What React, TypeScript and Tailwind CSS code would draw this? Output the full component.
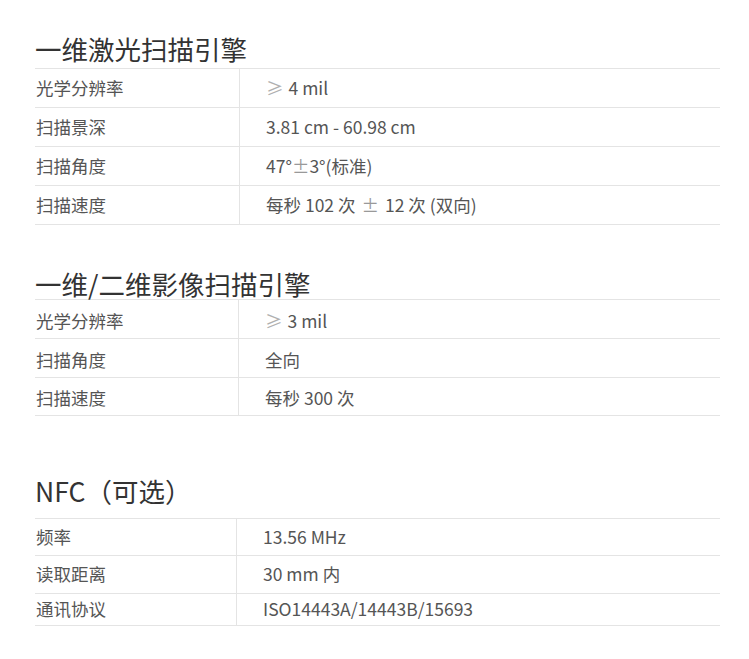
const FONT = "font-['Noto_Sans_CJK_SC','Noto_Sans',sans-serif]";

type Row = { label: string; value: React.ReactNode; h: string };

const LASER: Row[] = [
  { label: "光学分辨率", value: <><span className="text-[#b0b0b0] mr-[5px]">≥</span>4 mil</>, h: "h-[39px]" },
  { label: "扫描景深", value: "3.81 cm - 60.98 cm", h: "h-[39px]" },
  { label: "扫描角度", value: <>47°<span className="text-[#999]">±</span>3°(标准)</>, h: "h-[39px]" },
  { label: "扫描速度", value: <>每秒 102 次<span className="text-[#999] mx-[6px]">±</span>12 次 (双向)</>, h: "h-[39px]" },
];

const IMAGER: Row[] = [
  { label: "光学分辨率", value: <><span className="text-[#b0b0b0] mr-[5px]">≥</span>3 mil</>, h: "h-[39px]" },
  { label: "扫描角度", value: "全向", h: "h-[39px]" },
  { label: "扫描速度", value: "每秒 300 次", h: "h-[38px]" },
];

const NFC: Row[] = [
  { label: "频率", value: "13.56 MHz", h: "h-[37px]" },
  { label: "读取距离", value: "30 mm 内", h: "h-[38px]" },
  { label: "通讯协议", value: "ISO14443A/14443B/15693", h: "h-[32px]" },
];

function SpecTable({ rows, labelW, pt = "" }: { rows: Row[]; labelW: string; pt?: string }) {
  return (
    <div className="border-t border-[#e4e4e4]">
      {rows.map((r) => (
        <div key={r.label} className={`flex border-b border-[#e4e4e4] ${r.h}`}>
          <div className={`${labelW} ${pt} shrink-0 flex items-center pl-px border-r border-[#e4e4e4] text-[17.5px] text-[#555]`}>
            {r.label}
          </div>
          <div className={`flex-1 ${pt} flex items-center pl-[26px] text-[17.5px] text-[#555]`}>{r.value}</div>
        </div>
      ))}
    </div>
  );
}

export default function App() {
  return (
    <main className={`min-h-screen bg-white ${FONT}`}>
      <div className="w-[685px] ml-[35px] pt-[34px] pb-8">
        <section>
          <h2 className="text-[26.5px] leading-[30px] text-[#333] mb-[4px]">一维激光扫描引擎</h2>
          <SpecTable rows={LASER} labelW="w-[205px]" />
        </section>

        <section className="mt-[44px]">
          <h2 className="text-[26.5px] leading-[30px] text-[#333]">一维/二维影像扫描引擎</h2>
          <SpecTable rows={IMAGER} labelW="w-[204px]" pt="pt-[4px]" />
        </section>

        <section className="mt-[60px]">
          <h2 className="text-[26.5px] leading-[30px] text-[#333] mb-[12px]">NFC（可选）</h2>
          <SpecTable rows={NFC} labelW="w-[202px]" />
        </section>
      </div>
    </main>
  );
}
